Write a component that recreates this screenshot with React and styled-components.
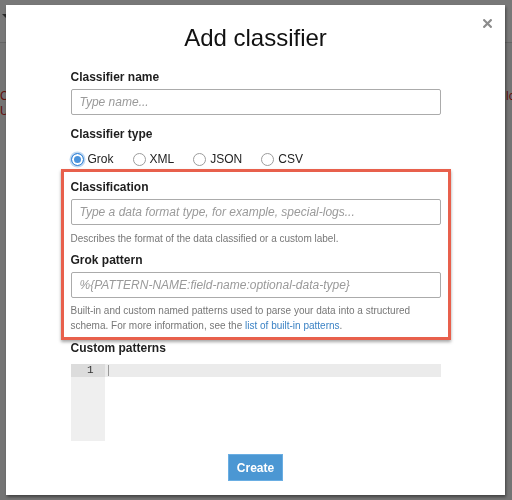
import React, { useState } from "react";
import styled, { createGlobalStyle } from "styled-components";

const GlobalStyle = createGlobalStyle`
  html, body {
    margin: 0;
    padding: 0;
    width: 512px;
    height: 500px;
    overflow: hidden;
    font-family: "Liberation Sans", Arial, Helvetica, sans-serif;
  }
  * {
    box-sizing: border-box;
  }
`;

const TYPES = ["Grok", "XML", "JSON", "CSV"];

export default function App() {
  const [type, setType] = useState("Grok");

  return (
    <>
      <GlobalStyle />
      <Page>
        <PageHeader>
          <Caret />
        </PageHeader>
        <ErrorRow>
          <ErrorText>
            Classifier name is required.
            <br />
            Use a unique name.
          </ErrorText>
          <ErrorText>lcon</ErrorText>
        </ErrorRow>
      </Page>

      <Backdrop />

      <Modal>
        <CloseButton aria-label="Close">
          <svg width="9" height="9" viewBox="0 0 9 9">
            <path d="M1.2 1.2 L7.8 7.8 M7.8 1.2 L1.2 7.8" stroke="#8c8c8c" strokeWidth="2.2" strokeLinecap="square" />
          </svg>
        </CloseButton>

        <Title>Add classifier</Title>

        <Form>
          <Label>Classifier name</Label>
          <Input placeholder="Type name..." />

          <Label $top={12}>Classifier type</Label>
          <RadioRow>
            {TYPES.map((t) => (
              <RadioItem key={t} onClick={() => setType(t)}>
                <Radio $checked={type === t} />
                <span>{t}</span>
              </RadioItem>
            ))}
          </RadioRow>

          <Highlight>
            <Label>Classification</Label>
            <Input placeholder="Type a data format type, for example, special-logs..." />
            <Help>Describes the format of the data classified or a custom label.</Help>

            <Label $top={7}>Grok pattern</Label>
            <Input placeholder="%{PATTERN-NAME:field-name:optional-data-type}" />
            <Help $top={5}>
              Built-in and custom named patterns used to parse your data into a structured
              schema. For more information, see the <Link href="#">list of built-in patterns</Link>.
            </Help>
          </Highlight>

          <Label $top={1}>Custom patterns</Label>
          <Editor>
            <Gutter>
              <LineNo>1</LineNo>
            </Gutter>
            <Lines>
              <ActiveLine>
                <Cursor />
              </ActiveLine>
            </Lines>
          </Editor>
        </Form>

        <Footer>
          <CreateButton>Create</CreateButton>
        </Footer>
      </Modal>
    </>
  );
}

const Page = styled.div`
  width: 512px;
  height: 500px;
  background: #f7f7f7;
  overflow: hidden;
`;

const PageHeader = styled.div`
  height: 43px;
  border-top: 1px solid #fff;
  border-bottom: 1px solid #d6d6d6;
  background: #ffffff;
  display: flex;
  align-items: center;
  padding-left: 2px;
`;

const Caret = styled.div`
  width: 0;
  height: 0;
  border-left: 4px solid transparent;
  border-right: 4px solid transparent;
  border-top: 4px solid #555;
  margin-top: -12px;
`;

const ErrorRow = styled.div`
  display: grid;
  grid-template-columns: 506px 1fr;
  margin-top: 46px;
  white-space: nowrap;
  overflow: hidden;
`;

const ErrorText = styled.div`
  color: #d0241a;
  font-size: 12px;
  line-height: 15px;
  overflow: hidden;
`;

const Backdrop = styled.div`
  position: fixed;
  inset: 0;
  background: rgba(0, 0, 0, 0.53);
`;

const Modal = styled.div`
  position: fixed;
  left: 6px;
  top: 5px;
  width: 499px;
  height: 490px;
  background: #fff;
  box-shadow: 1px 2px 3px rgba(0, 0, 0, 0.45);
  display: flex;
  flex-direction: column;
  align-items: center;
`;

const CloseButton = styled.button`
  position: absolute;
  top: 13px;
  right: 12px;
  width: 11px;
  height: 11px;
  padding: 0;
  border: none;
  background: none;
  display: flex;
  align-items: center;
  justify-content: center;
  cursor: pointer;
`;

const Title = styled.h1`
  margin: 18px 0 0;
  font-size: 24px;
  line-height: 30px;
  font-weight: 400;
  color: #111;
`;

const Form = styled.div`
  width: 370px;
  margin-top: 17px;
  display: flex;
  flex-direction: column;
`;

const Label = styled.div`
  font-size: 12px;
  line-height: 15px;
  font-weight: 700;
  color: #1e1e1e;
  margin-top: ${(p) => p.$top || 0}px;
  margin-bottom: 4px;
`;

const Input = styled.input`
  width: 100%;
  height: 26px;
  border: 1px solid #ababab;
  border-radius: 2px;
  padding: 0 8px;
  font-family: inherit;
  font-size: 12px;
  color: #222;
  outline: none;
  &::placeholder {
    color: #9a9a9a;
    font-style: italic;
  }
`;

const RadioRow = styled.div`
  display: flex;
  align-items: center;
  gap: 19px;
  margin-top: 5px;
  height: 16px;
`;

const RadioItem = styled.label`
  display: flex;
  align-items: center;
  gap: 4px;
  font-size: 12px;
  color: #222;
  cursor: pointer;
`;

const Radio = styled.span`
  width: 13px;
  height: 13px;
  border-radius: 50%;
  border: 1px solid ${(p) => (p.$checked ? "#3a87d6" : "#9c9c9c")};
  background: ${(p) => (p.$checked ? "#4a93dc" : "#fff")};
  box-shadow: ${(p) =>
    p.$checked ? "inset 0 0 0 2px #fff, 0 0 0 1.5px rgba(74, 147, 220, 0.35)" : "none"};
`;

const Highlight = styled.div`
  margin: 2px -10px 0;
  padding: 8px 7px 4px;
  border: 3px solid #e8604c;
  box-shadow: 0 2px 3px rgba(0, 0, 0, 0.35);
  display: flex;
  flex-direction: column;
`;

const Help = styled.div`
  margin-top: ${(p) => p.$top ?? 6}px;
  font-size: 10px;
  line-height: 15px;
  color: #777;
`;

const Link = styled.a`
  color: #3b82c4;
  text-decoration: none;
`;

const Editor = styled.div`
  margin-top: 4px;
  display: flex;
  height: 77px;
`;

const Gutter = styled.div`
  width: 34px;
  background: #efefef;
`;

const LineNo = styled.div`
  height: 13px;
  background: #dcdcdc;
  font-family: "Liberation Mono", monospace;
  font-size: 11px;
  line-height: 13px;
  color: #333;
  text-align: right;
  padding-right: 11px;
`;

const Lines = styled.div`
  flex: 1;
`;

const ActiveLine = styled.div`
  height: 13px;
  background: #ebebeb;
  padding-left: 3px;
  display: flex;
  align-items: center;
`;

const Cursor = styled.div`
  width: 1px;
  height: 11px;
  background: #999;
`;

const Footer = styled.div`
  margin-top: 13px;
`;

const CreateButton = styled.button`
  height: 27px;
  padding: 0 8px;
  background: #4b97d3;
  border: 1px solid #6aaee3;
  color: #fff;
  font-family: inherit;
  font-size: 12px;
  font-weight: 700;
  cursor: pointer;
`;
